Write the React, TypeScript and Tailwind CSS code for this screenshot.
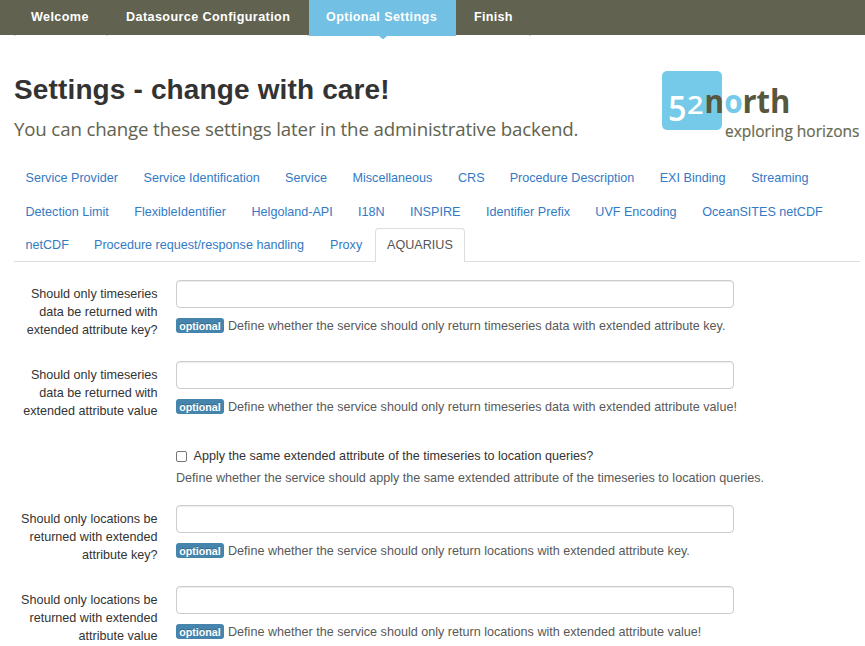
import React from "react";

type Tab = { label: string; width: string };

const tabRows: Tab[][] = [
  [
    { label: "Service Provider", width: "w-[118px]" },
    { label: "Service Identification", width: "w-[141.5px]" },
    { label: "Service", width: "w-[67.5px]" },
    { label: "Miscellaneous", width: "w-[105.5px]" },
    { label: "CRS", width: "w-[51.7px]" },
    { label: "Procedure Description", width: "w-[150px]" },
    { label: "EXI Binding", width: "w-[91.5px]" },
    { label: "Streaming", width: "w-[80px]" },
  ],
  [
    { label: "Detection Limit", width: "w-[108.7px]" },
    { label: "FlexibleIdentifier", width: "w-[117.3px]" },
    { label: "Helgoland-API", width: "w-[106.5px]" },
    { label: "I18N", width: "w-[52px]" },
    { label: "INSPIRE", width: "w-[76px]" },
    { label: "Identifier Prefix", width: "w-[109.3px]" },
    { label: "UVF Encoding", width: "w-[107px]" },
    { label: "OceanSITES netCDF", width: "w-[146px]" },
  ],
];

const lastRow: Tab[] = [
  { label: "netCDF", width: "w-[68.5px]" },
  { label: "Procedure request/response handling", width: "w-[236px]" },
  { label: "Proxy", width: "w-[45px]" },
];

function TabLink({ tab }: { tab: Tab }) {
  return (
    <li className={`shrink-0 ${tab.width}`}>
      <a className="whitespace-nowrap text-[#337ac4]">{tab.label}</a>
    </li>
  );
}

function Logo() {
  return (
    <svg width="203" height="80" viewBox="0 0 203 80" className="block" role="img" aria-label="52north exploring horizons">
      <rect x="2" y="1" width="60" height="59" rx="5" fill="#74cae8" />
      <g fontFamily="'Open Sans', 'Noto Sans', sans-serif">
        <g fontWeight="600" fill="#fff">
          <text x="8" y="51" fontSize="34" textLength="18.5" lengthAdjust="spacingAndGlyphs">5</text>
          <text x="27" y="43.5" fontSize="25" textLength="16.5" lengthAdjust="spacingAndGlyphs">2</text>
        </g>
        <g fontWeight="700" fontSize="33" fill="#56573d">
          <text x="44.5" y="42.7" textLength="19.5" lengthAdjust="spacingAndGlyphs">n</text>
          <text x="64.2" y="42.7" fill="#74cae8" textLength="18.5" lengthAdjust="spacingAndGlyphs">o</text>
          <text x="82.5" y="42.7" textLength="48" lengthAdjust="spacingAndGlyphs">rth</text>
        </g>
        <text x="65" y="67" fontSize="17" fill="#68694f" stroke="#68694f" strokeWidth="0.2" textLength="134.5" lengthAdjust="spacingAndGlyphs">exploring horizons</text>
      </g>
    </svg>
  );
}

function Field({ lines, help }: { lines: string[]; help: string }) {
  return (
    <div className="flex h-[81px]">
      <label className="w-[157.6px] shrink-0 pt-[5px] text-right leading-[18px]">
        {lines.map((line) => (
          <span key={line} className="block whitespace-nowrap">{line}</span>
        ))}
      </label>
      <div className="ml-[18.4px]">
        <input
          type="text"
          className="block h-7 w-[558px] rounded-[4px] border border-[#ccc] bg-white px-2 shadow-[inset_0_1px_1px_rgba(0,0,0,0.075)] outline-none"
        />
        <div className="mt-[9px] flex h-[18px] items-center whitespace-nowrap text-[#595959]">
          <span className="mr-1 -mt-px flex h-[15px] w-12 items-center justify-center rounded-[3px] bg-[#4584ad] pt-px text-[10.7px] font-bold text-white [text-shadow:0_-1px_0_rgba(0,0,0,0.25)]">
            optional
          </span>
          <span>{help}</span>
        </div>
      </div>
    </div>
  );
}

export default function App() {
  return (
    <div className="h-[646px] w-[865px] overflow-hidden bg-white font-['Liberation_Sans',Arial,sans-serif] text-[12.6px] text-[#333]">
      <nav className="flex h-[35px] bg-[#61624f] text-[12.6px] leading-[34px] font-bold tracking-[0.4px] whitespace-nowrap text-white">
        <div className="w-[108px] pl-[31px]">Welcome</div>
        <div className="w-[201px] pl-[18px]">Datasource Configuration</div>
        <div className="relative h-9 w-[147px] bg-[#72c0e3] pl-[17px]">
          Optional Settings
          <svg className="absolute top-9 left-[70px]" width="8" height="3" viewBox="0 0 8 3">
            <path d="M0 0h8L4.5 3h-1z" fill="#72c0e3" />
          </svg>
        </div>
        <div className="pl-[18px] tracking-[0.25px]">Finish</div>
      </nav>
      <div className="flex h-px pl-[14px]">
        <span className="mr-[90px] w-0.5 bg-[#deded8]" />
        <span className="mr-[199px] w-0.5 bg-[#deded8]" />
        <span className="mr-[220px] w-0.5 bg-[#deded8]" />
        <span className="w-0.5 bg-[#deded8]" />
      </div>

      <header className="flex h-[125px] justify-between pl-[14px]">
        <div className="pt-[36px] whitespace-nowrap">
          <h1 className="text-[28px] leading-9 font-bold tracking-[0.14px]">Settings - change with care!</h1>
          <p className="mt-[7px] font-['Open_Sans','Noto_Sans',sans-serif] text-[18.7px] leading-7 tracking-[-0.16px] text-[#61624f]">
            You can change these settings later in the administrative backend.
          </p>
        </div>
        <div className="w-[205px] shrink-0 pt-[34px]">
          <Logo />
        </div>
      </header>

      <div className="ml-[14px] w-[846px] leading-[18px]">
        {tabRows.map((row, i) => (
          <ul key={i} className="flex h-[33.5px] pt-[8px] pl-[11.5px]">
            {row.map((tab) => <TabLink key={tab.label} tab={tab} />)}
          </ul>
        ))}
        <div className="flex h-[34px]">
          <ul className="flex w-[361px] border-b border-[#ddd] pt-[7.5px] pl-[11.5px]">
            {lastRow.map((tab) => <TabLink key={tab.label} tab={tab} />)}
          </ul>
          <div className="w-[90px] rounded-t-[4px] border border-b-0 border-[#ddd] pt-[6.5px] pl-[11px] text-[#555]">AQUARIUS</div>
          <div className="flex-1 border-b border-[#ddd]" />
        </div>
      </div>

      <form className="pt-[18px]">
        <Field
          lines={["Should only timeseries", "data be returned with", "extended attribute key?"]}
          help="Define whether the service should only return timeseries data with extended attribute key."
        />
        <Field
          lines={["Should only timeseries", "data be returned with", "extended attribute value"]}
          help="Define whether the service should only return timeseries data with extended attribute value!"
        />
        <div className="h-[63px] pt-[5px] pl-[176px]">
          <label className="flex h-[18px] items-center">
            <input type="checkbox" className="mr-[6.5px] size-[11px] appearance-none rounded-[2px] border border-[#767676] bg-white" />
            Apply the same extended attribute of the timeseries to location queries?
          </label>
          <p className="mt-1 leading-[18px] text-[#595959]">
            Define whether the service should apply the same extended attribute of the timeseries to location queries.
          </p>
        </div>
        <Field
          lines={["Should only locations be", "returned with extended", "attribute key?"]}
          help="Define whether the service should only return locations with extended attribute key."
        />
        <Field
          lines={["Should only locations be", "returned with extended", "attribute value"]}
          help="Define whether the service should only return locations with extended attribute value!"
        />
      </form>
    </div>
  );
}
